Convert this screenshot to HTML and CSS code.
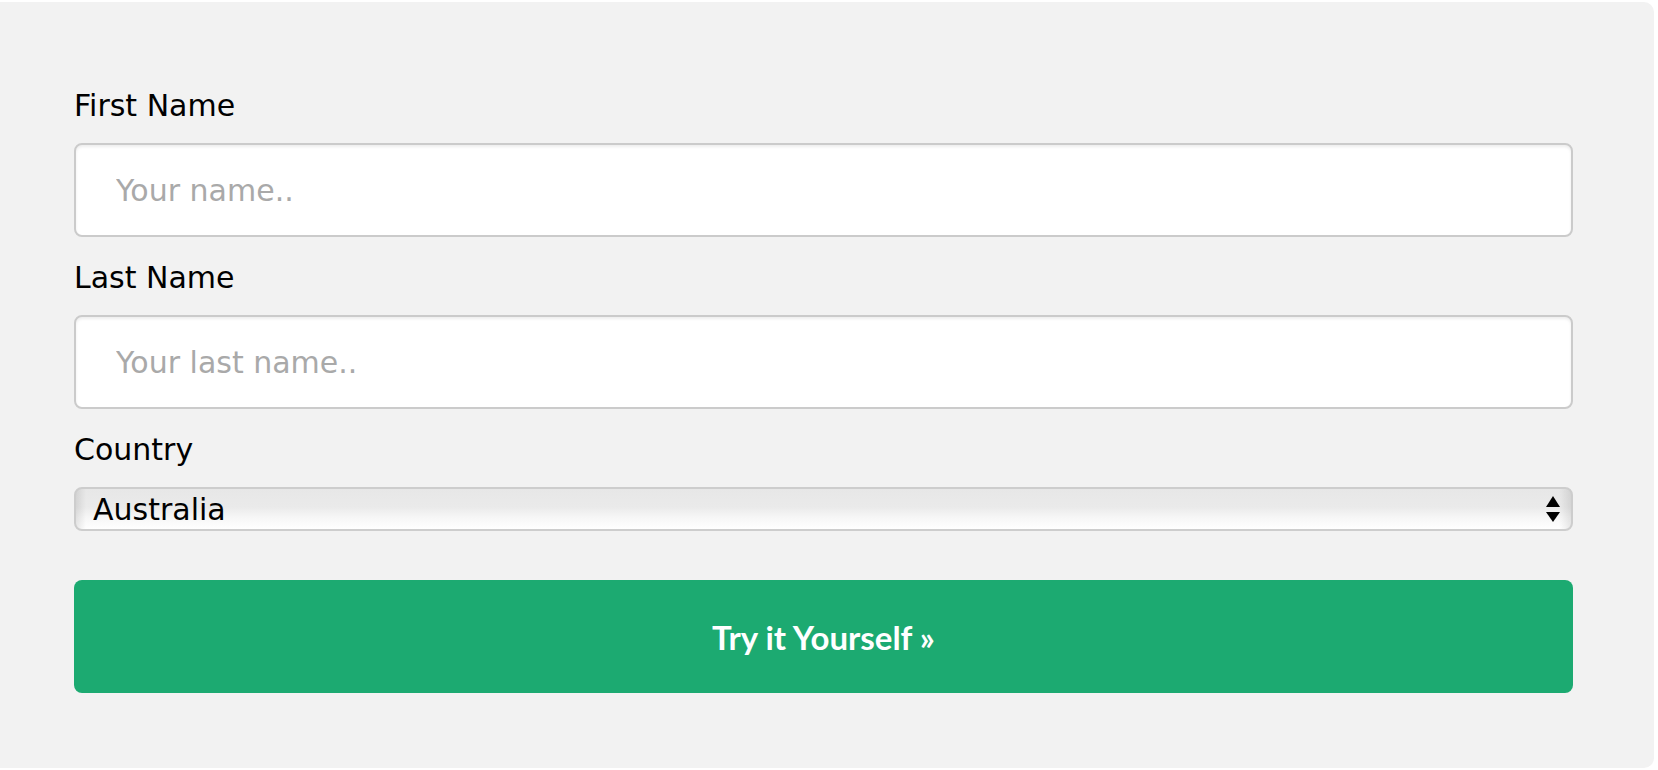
FILE: index.html
```html
<!DOCTYPE html>
<html lang="en">
<head>
<meta charset="utf-8">
<title>Form</title>
<link rel="stylesheet" href="styles.css">
</head>
<body>
<div class="panel">
  <form class="form">
    <label class="label" for="fname">First Name</label>
    <input class="field" type="text" id="fname" name="firstname" placeholder="Your name..">
    <label class="label" for="lname">Last Name</label>
    <input class="field" type="text" id="lname" name="lastname" placeholder="Your last name..">
    <label class="label" for="country">Country</label>
    <div class="select-wrap">
      <select class="select" id="country" name="country">
        <option value="australia">Australia</option>
        <option value="canada">Canada</option>
        <option value="usa">USA</option>
      </select>
      <svg class="select-arrows" width="14" height="26" viewBox="0 0 14 26" aria-hidden="true">
        <polygon points="7,0 14,11 0,11" fill="#000"/>
        <polygon points="0,16 14,16 7,26" fill="#000"/>
      </svg>
    </div>
    <button class="submit" type="button">Try it Yourself &raquo;</button>
  </form>
</div>
</body>
</html>
```
FILE: styles.css
```css
html, body {
  margin: 0;
  padding: 0;
  background: #ffffff;
}

.panel {
  box-sizing: border-box;
  height: 766px;
  margin: 2px 4px 0 0;
  padding: 86px 81px 0 74px;
  background: #f2f2f2;
  border-radius: 0 10px 10px 0;
}

.form {
  display: flex;
  flex-direction: column;
}

.label {
  display: block;
  font-family: "DejaVu Sans", Verdana, sans-serif;
  font-size: 30px;
  line-height: 36px;
  color: #000;
}

.field {
  box-sizing: border-box;
  display: block;
  width: 100%;
  height: 94px;
  margin: 19px 0 23px;
  padding: 0 40px;
  font-family: "DejaVu Sans", Verdana, sans-serif;
  font-size: 30px;
  color: #000;
  background: #fff;
  border: 2px solid #cbcbcb;
  border-radius: 8px;
  box-shadow: inset 0 2px 3px rgba(0, 0, 0, 0.07);
  outline: none;
}

.field::placeholder {
  color: #a9a9a9;
}

.select-wrap {
  position: relative;
  margin-top: 19px;
}

.select {
  box-sizing: border-box;
  display: block;
  width: 100%;
  height: 44px;
  padding: 0 40px 0 17px;
  -webkit-appearance: none;
  appearance: none;
  font-family: "DejaVu Sans", Verdana, sans-serif;
  font-size: 30px;
  color: #000;
  border: 2px solid #cdcdcd;
  border-radius: 8px;
  background:
    linear-gradient(to right, rgba(0, 0, 0, 0.09), rgba(0, 0, 0, 0) 10px),
    linear-gradient(to left, rgba(0, 0, 0, 0.09), rgba(0, 0, 0, 0) 12px),
    linear-gradient(to bottom, #e7e7e7 0%, #eaeaea 45%, #f6f6f6 70%, #ffffff 100%);
  outline: none;
}

.select-arrows {
  position: absolute;
  right: 13px;
  top: 9px;
  pointer-events: none;
}

.submit {
  display: block;
  width: 100%;
  height: 113px;
  margin-top: 49px;
  padding: 0;
  border: none;
  border-radius: 8px;
  background: #1caa71;
  color: #fff;
  font-family: Lato, "Open Sans", sans-serif;
  font-weight: 700;
  font-size: 33px;
  cursor: pointer;
}
```
